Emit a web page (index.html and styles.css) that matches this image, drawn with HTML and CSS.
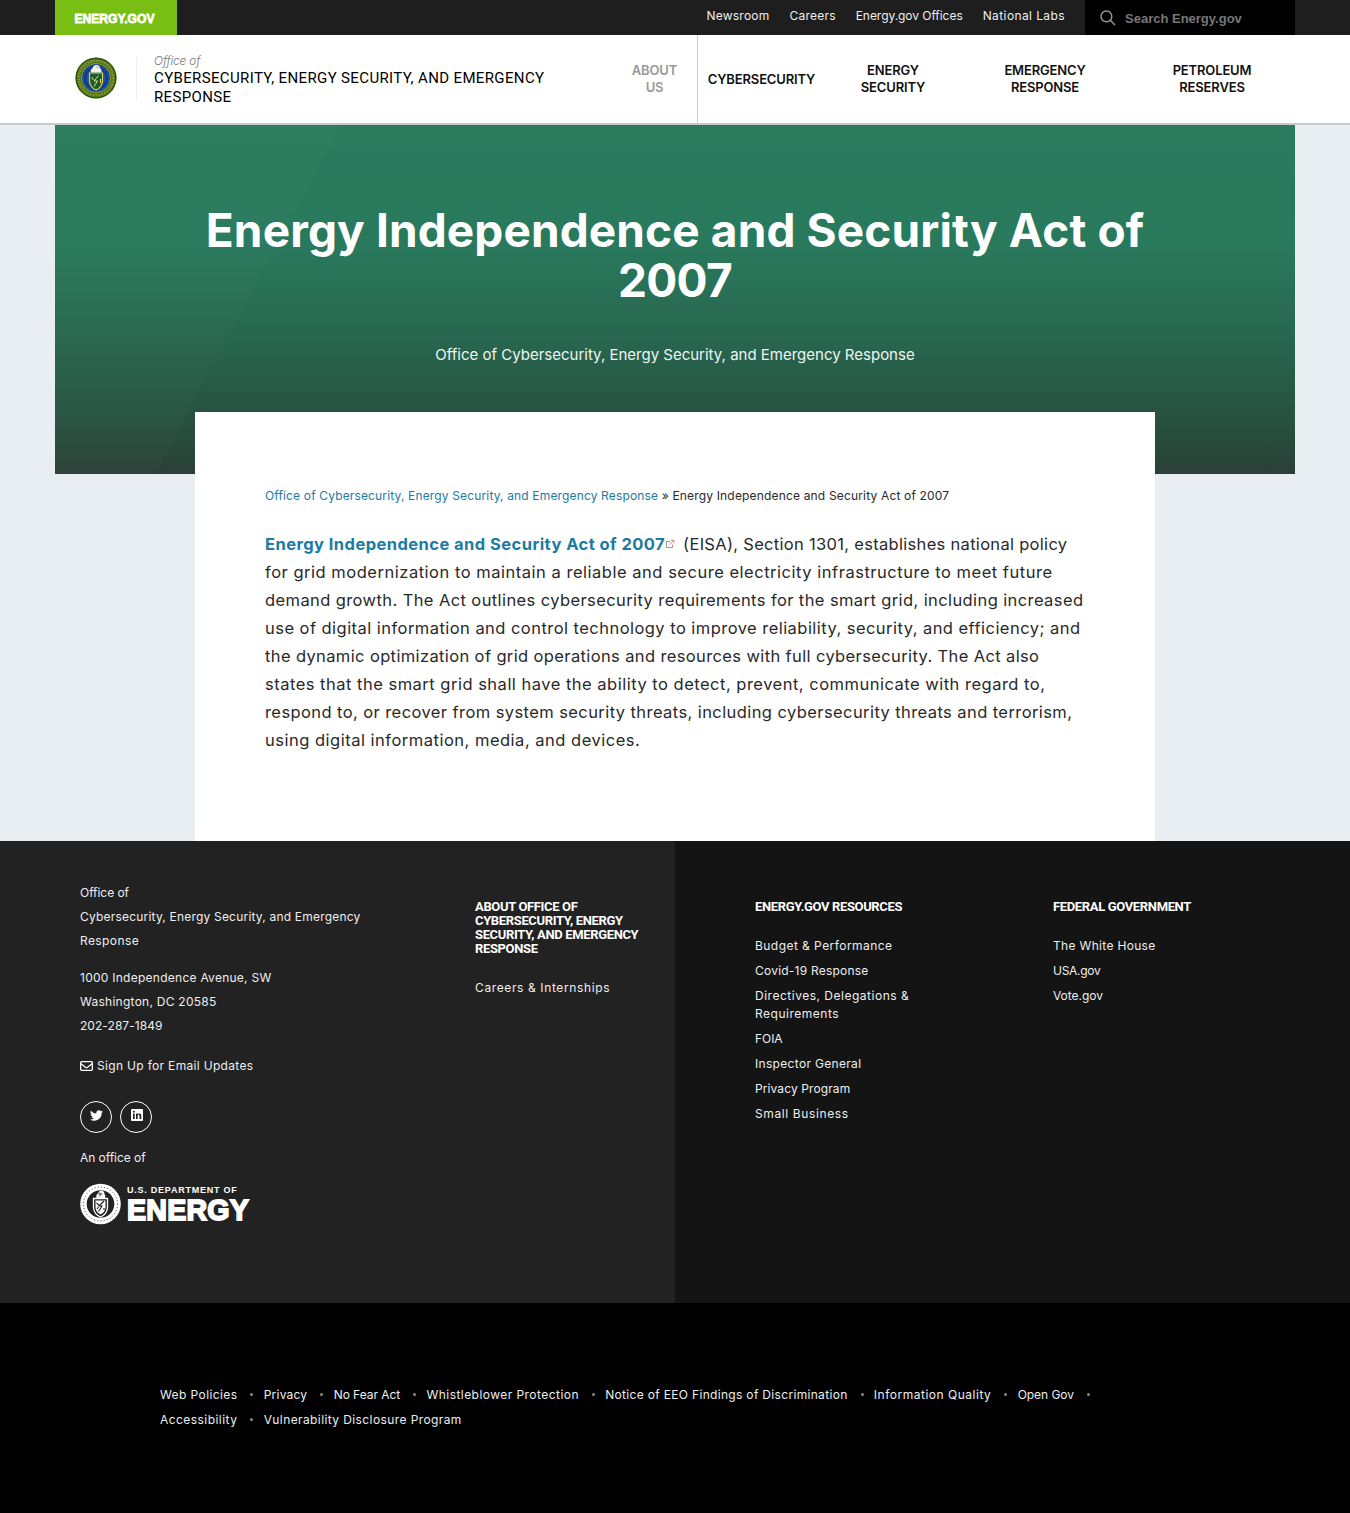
FILE: index.html
```html
<!DOCTYPE html>
<html lang="en">
<head>
<meta charset="utf-8">
<title>Energy Independence and Security Act of 2007 | Department of Energy</title>
<link rel="stylesheet" href="styles.css">
</head>
<body>
<div class="topbar">
  <div class="container topbar-inner">
    <a class="brand" aria-label="Energy.gov"><svg width="84" height="18" viewBox="0 0 84 18"><text x="0.5" y="14.500" textLength="80" lengthAdjust="spacingAndGlyphs" class="brand-text">ENERGY.GOV</text></svg></a>
    <nav class="utility">
      <a class="s2">Newsroom</a><a class="s2">Careers</a><a class="s0">Energy.gov Offices</a><a class="s4">National Labs</a>
    </nav>
    <div class="search">
      <svg width="16" height="16" viewBox="0 0 16 16" fill="none" stroke="#999" stroke-width="1.4"><circle cx="6.4" cy="6.4" r="5.4"/><path d="M10.3 10.3L15 15"/></svg>
      <span>Search Energy.gov</span>
    </div>
  </div>
</div>
<header class="header">
  <div class="container header-inner">
    <svg class="seal" width="42" height="42" viewBox="0 0 42 42">
      <circle cx="21" cy="21" r="20.6" fill="#54791c"/>
      <circle cx="21" cy="21" r="19.8" fill="none" stroke="#29470f" stroke-width="1"/>
      <circle cx="21" cy="21" r="17.3" fill="none" stroke="#a09a35" stroke-width="2" stroke-dasharray="1.3 1.6"/>
      <circle cx="21" cy="21" r="14.6" fill="#1c4f9c" stroke="#8d9a30" stroke-width="1"/>
      <circle cx="21" cy="21" r="11" fill="none" stroke="#153b82" stroke-width="2"/>
      <path d="M16 15.5q-1-3 1.5-4.2 1-3.3 4-3.3 3 .2 3.4 3 2.3 1.500 1.400 4.500z" fill="#f2f2f2"/>
      <path d="M21 9.500l3 .5-2 1.200z" fill="#d5a72a"/>
      <path d="M14.500 16h13v8.500q-.7 6-6.500 8.500-5.800-2.500-6.500-8.500z" fill="#185c32" stroke="#e0cd56" stroke-width="1.200"/>
      <path d="M23.500 18.500l-4.500 5.500h3.500l-3.500 5.500M16.500 20l2 3M25.500 22v4" fill="none" stroke="#eadf74" stroke-width="1"/>
    </svg>
    <div class="office">
      <div class="office-of">Office of</div>
      <div class="office-name">CYBERSECURITY, ENERGY SECURITY, AND EMERGENCY<br>RESPONSE</div>
    </div>
    <nav class="mainnav">
      <a class="about">ABOUT<br>US</a>
      <a class="cyber">CYBERSECURITY</a>
      <a class="energy">ENERGY<br>SECURITY</a>
      <a class="emergency">EMERGENCY<br>RESPONSE</a>
      <a class="petroleum">PETROLEUM<br>RESERVES</a>
    </nav>
  </div>
</header>
<main>
  <section class="container hero">
    <h1>Energy Independence and Security Act of<br><span class="year">2007</span></h1>
    <p>Office of Cybersecurity, Energy Security, and Emergency Response</p>
  </section>
  <article class="card">
    <div class="crumbs"><a>Office of Cybersecurity, Energy Security, and Emergency Response</a> <span>»</span> Energy Independence and Security Act of 2007</div>
    <p class="copy">
      <span><a>Energy Independence and Security Act of 2007</a><svg class="ext" width="10" height="10" viewBox="0 0 10 10" fill="none" stroke="#999"><path d="M5 2.500H1.500v6h6V5.500"/><path d="M4.500 5.500L8.500 1.500M6 1.200h3v3" stroke="#c9897c"/></svg><i class="rest">(EISA), Section 1301, establishes national policy</i></span>
      <span>for grid modernization to maintain a reliable and secure electricity infrastructure to meet future</span>
      <span>demand growth. The Act outlines cybersecurity requirements for the smart grid, including increased</span>
      <span>use of digital information and control technology to improve reliability, security, and efficiency; and</span>
      <span>the dynamic optimization of grid operations and resources with full cybersecurity. The Act also</span>
      <span>states that the smart grid shall have the ability to detect, prevent, communicate with regard to,</span>
      <span>respond to, or recover from system security threats, including cybersecurity threats and terrorism,</span>
      <span>using digital information, media, and devices.</span>
    </p>
  </article>
</main>
<footer>
  <div class="foot">
    <div class="foot-left">
      <div class="contact">
        <p><span class="s0">Office of</span><br>Cybersecurity, Energy Security, and Emergency<br><span class="s4">Response</span></p>
        <p class="address">1000 Independence Avenue, SW<br>Washington, DC 20585<br><span class="s1">202-287-1849</span></p>
        <a class="signup s3"><svg width="13" height="10" viewBox="0 0 13 10" fill="none" stroke="#fff" stroke-width="1.300"><rect x=".65" y=".65" width="11.700" height="8.700" rx="1"/><path d="M1 2.700l4.400 3.500q1.100.8 2.200 0L12 2.700"/></svg>Sign Up for Email Updates</a>
        <div class="social">
          <a aria-label="Twitter"><svg width="13" height="13" viewBox="0 0 24 24" fill="#fff"><path d="M24 4.600a10 10 0 0 1-2.800.8 5 5 0 0 0 2.100-2.700 10 10 0 0 1-3.100 1.200 4.900 4.900 0 0 0-8.400 4.500A14 14 0 0 1 1.700 3.200a4.900 4.900 0 0 0 1.500 6.500 4.900 4.900 0 0 1-2.200-.6 4.900 4.900 0 0 0 3.900 4.900 5 5 0 0 1-2.200.1 4.900 4.900 0 0 0 4.600 3.400A9.900 9.900 0 0 1 0 19.500 14 14 0 0 0 21.500 7.100 10 10 0 0 0 24 4.600z"/></svg></a>
          <a aria-label="LinkedIn"><svg width="12" height="12" viewBox="0 0 24 24"><rect width="24" height="24" rx="2" fill="#fff"/><path d="M4 9h3.400v11H4zM10 9h3.200v1.600c1.500-2.700 7.300-2.800 7.300 2.700V20H17v-6c0-3.300-3.600-3-3.600 0v6H10z" fill="#222"/><circle cx="5.700" cy="5.500" r="2" fill="#222"/></svg></a>
        </div>
        <p class="an-office">An office of</p>
        <svg class="doe" width="174" height="48" viewBox="0 0 174 48">
          <circle cx="20.500" cy="21" r="20.300" fill="#fff"/>
          <circle cx="20.500" cy="21" r="17" fill="none" stroke="#222" stroke-width=".9" stroke-dasharray="1 2.200"/>
          <circle cx="20.500" cy="21" r="13.800" fill="#222"/>
          <path d="M16.500 15q-1-3 1.500-4.500 1-3.300 3.500-3 3 .5 3 3.500 1.500 1.500.5 4z" fill="#fff"/>
          <path d="M18.500 11h4M20 9.500v4" stroke="#222" stroke-width=".8"/>
          <path d="M13.500 15.500h14v9.500q-.8 6.500-7 9-6.200-2.500-7-9z" fill="#222" stroke="#fff" stroke-width="1.300"/>
          <path d="M15.500 17.500h10v7.500q-.8 4.500-5 6.500-4.200-2-5-6.500z" fill="#fff"/>
          <path d="M24 18l-5 5h3l-3.500 5.500M16.500 20l2.500 2M17 26l1.500-2M24 25v2" fill="none" stroke="#222" stroke-width="1.100"/>
          <text x="47" y="9.500" textLength="110" class="doe-small">U.S. DEPARTMENT OF</text>
          <text x="47" y="36.700" textLength="122" lengthAdjust="spacingAndGlyphs" class="doe-big">ENERGY</text>
        </svg>
      </div>
      <div class="col about-col">
        <h3>ABOUT OFFICE OF<br>CYBERSECURITY, ENERGY<br>SECURITY, AND EMERGENCY<br>RESPONSE</h3>
        <a class="s6">Careers &amp; Internships</a>
      </div>
    </div>
    <div class="foot-right">
      <div class="col">
        <h3>ENERGY.GOV RESOURCES</h3>
        <a class="s45">Budget &amp; Performance</a><a class="s2">Covid-19 Response</a><a class="s5">Directives, Delegations &amp;<br>Requirements</a><a class="s0">FOIA</a><a class="s3">Inspector General</a><a class="s1">Privacy Program</a><a class="s6">Small Business</a>
      </div>
      <div class="col">
        <h3>FEDERAL GOVERNMENT</h3>
        <a class="s3">The White House</a><a class="tight">USA.gov</a><a class="s0">Vote.gov</a>
      </div>
    </div>
  </div>
  <div class="legal">
    <div class="legal-links">
      <a class="s4">Web Policies</a><a class="s2">Privacy</a><a class="s0">No Fear Act</a><a class="s45">Whistleblower Protection</a><a class="s3">Notice of EEO Findings of Discrimination</a><a class="s5">Information Quality</a><a class="s0">Open Gov</a>
    </div>
    <div class="legal-links">
      <a class="s45">Accessibility</a><a class="s4 last">Vulnerability Disclosure Program</a>
    </div>
  </div>
</footer>
</body>
</html>
```
FILE: styles.css
```css
* { box-sizing: border-box; }
body { margin: 0; background: #e9eef2; color: #292929; font: 12px/18px "Inter", "Liberation Sans", sans-serif; }
p, h1, h3 { margin: 0; }
svg { display: block; flex: none; }
.container { width: 1240px; margin: 0 auto; }

/* Tracking steps */
.tight { letter-spacing: -0.3px; }
.s0 { letter-spacing: -0.045px; }
.s1 { letter-spacing: 0.1px; }
.s2 { letter-spacing: 0.22px; }
.s3 { letter-spacing: 0.32px; }
.s4 { letter-spacing: 0.4px; }
.s45 { letter-spacing: 0.45px; }
.s5 { letter-spacing: 0.51px; }
.s6 { letter-spacing: 0.62px; }

.topbar { background: #1e1e1e; height: 35px; }
.topbar-inner { display: flex; height: 35px; }
.brand { width: 122px; padding: 8px 0 0 19px; background: #78be13; }
.brand-text { font: bold 13.5px "Liberation Sans", sans-serif; fill: #fff; stroke: #fff; stroke-width: 0.8; }
.utility { display: flex; flex: 1; justify-content: flex-end; gap: 20px; padding: 7px 20px 0 0; color: #eee; white-space: nowrap; }
.search { display: flex; align-items: center; gap: 9px; width: 210px; padding-left: 15px; background: #000; color: #777; font: bold 13px "Liberation Sans", sans-serif; }
.search span { padding-top: 2px; }

.header { height: 90px; background: #fff; border-bottom: 2px solid #c8c9ca; }
.header-inner { display: flex; height: 88px; }
.seal { margin: 22px 0 0 20px; }
.office { width: 476px; margin: 22px 0 22px 19px; padding-left: 17px; border-left: 1px solid #eee; color: #000; white-space: nowrap; }
.office-of { margin-top: -5px; color: #777; font: italic 300 12px/17px "Inter", sans-serif; letter-spacing: -0.2px; }
.office-name { font: 15px/19px "Roboto", sans-serif; letter-spacing: 0.365px; }
.mainnav { display: flex; align-items: center; margin-left: auto; color: #111; font: 600 13px/17px "Inter", sans-serif; letter-spacing: -0.15px; text-align: center; }
.about { display: flex; align-items: center; justify-content: center; width: 86px; height: 88px; border-right: 1px solid #ccc; color: #999; }
.cyber { width: 127px; }
.energy { width: 136px; }
.emergency { width: 168px; }
.petroleum { width: 166px; }

.hero { height: 349px; padding-top: 80px; background: linear-gradient(118deg, #ffffff04 0 20%, #ffffff00 20.1%), linear-gradient(#2a7b5f 0%, #29795c 35%, #286750 60%, #27523f 84%, #2a4038 100%); color: #fff; text-align: center; }
.hero h1 { font: 700 46px/50px "Inter", sans-serif; letter-spacing: 0.12px; white-space: nowrap; }
.year { letter-spacing: -0.7px; }
.hero p { margin-top: 36px; color: #eef5f1; font-size: 15px; line-height: 28px; }
.card { width: 960px; height: 429px; margin: -62px auto 0; padding: 75px 70px 0; background: #fff; white-space: nowrap; }
.card a { color: #1b7ba3; }
.crumbs { letter-spacing: 0.17px; }
.crumbs a { letter-spacing: 0.152px; }
.copy { display: grid; grid-auto-rows: 28px; margin-top: 25px; font-size: 16.5px; line-height: 28px; letter-spacing: 0.5px; }
.copy span:first-child { display: flex; align-items: center; }
.copy a { font-weight: 700; letter-spacing: 0.44px; }
.ext { margin-right: 8px; }
.rest { font-style: normal; letter-spacing: 0.304px; }
.copy span:nth-child(2) { letter-spacing: 0.518px; }
.copy span:nth-child(3) { letter-spacing: 0.4px; }
.copy span:nth-child(4) { letter-spacing: 0.456px; }
.copy span:nth-child(5) { letter-spacing: 0.373px; }
.copy span:nth-child(6) { letter-spacing: 0.495px; }
.copy span:nth-child(7) { letter-spacing: 0.415px; }

.foot { display: grid; grid-template-columns: 1fr 1fr; height: 462px; color: #eee; white-space: nowrap; }
.foot-left { display: flex; padding: 40px 0 0 80px; background: #222; }
.foot-right { display: flex; padding: 40px 0 0 80px; background: #141414; }
.contact { width: 395px; line-height: 24px; letter-spacing: 0.2px; }
.address { margin-top: 13px; letter-spacing: 0.26px; }
.address .s1 { letter-spacing: 0.05px; }
.signup { display: flex; align-items: center; gap: 4px; height: 24px; margin-top: 16px; }
.social { display: flex; gap: 8px; margin-top: 23px; }
.social a { display: flex; justify-content: center; width: 32px; height: 32px; padding: 7px 0 0 1px; border: 1px solid #fff; border-radius: 50%; }
.an-office { margin-top: 13px; letter-spacing: -0.05px; }
.doe { margin-top: 13px; }
.doe-small { font: bold 9px "Liberation Sans", sans-serif; fill: #fff; }
.doe-big { font: bold 30px "Liberation Sans", sans-serif; fill: #fff; stroke: #fff; stroke-width: 1.8; }
.col { width: 298px; padding-top: 19px; }
.col h3 { margin-bottom: 23px; color: #fff; font: 700 13px/14px "Roboto", sans-serif; letter-spacing: -0.35px; }
.col a { display: block; margin-bottom: 7px; line-height: 18px; }
.about-col { width: 200px; }

.legal { height: 210px; padding: 79px 0 0 160px; background: #000; color: #eee; white-space: nowrap; }
.legal-links { display: flex; height: 25px; line-height: 25px; }
.legal-links a { display: flex; align-items: center; }
.legal-links a::after { content: ""; width: 3px; height: 3px; margin: 0 10.3px 0 13px; border-radius: 50%; background: #888; }
.legal-links .last::after { content: none; }
```
